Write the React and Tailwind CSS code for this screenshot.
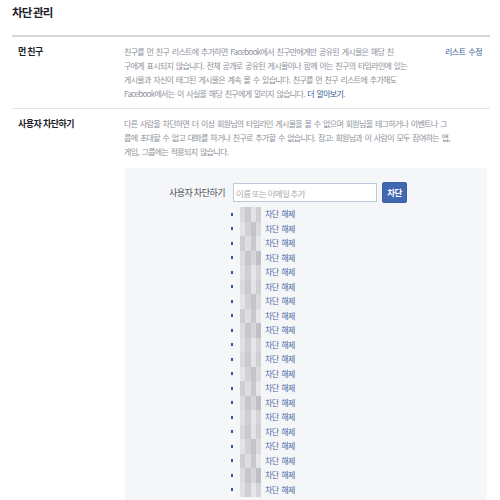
import React from 'react';

const shades = [
    ['#d9d9de', '#c9c9ce', '#e3e3e6', '#cfcfd4'],
    ['#e4e4e7', '#d2d2d6', '#c4c4c9', '#dadade'],
    ['#cdcdd2', '#dedee2', '#c9c9ce', '#e6e6e9'],
    ['#dcdce0', '#c6c6cb', '#d6d6da', '#bfbfc5'],
    ['#e0e0e4', '#cfcfd3', '#e6e6e9', '#d3d3d8'],
];

const BlurName = ({ i }) => {
    const row = shades[i % shades.length];
    return (
        <div className="flex h-[14.5px] w-[21px] blur-[0.6px]">
            {row.map((c, k) => (
                <span key={k} className="h-full flex-1" style={{ backgroundColor: c }} />
            ))}
        </div>
    );
};

const App = () => {
    const blocked = Array.from({ length: 20 }, (_, i) => i);

    return (
        <div className="w-[500px] h-[500px] overflow-hidden bg-white font-['Noto_Sans_CJK_KR',sans-serif]">
            <div className="pl-3 pr-[10px]">
                {/* Title */}
                <div className="h-[37px] pt-[5px] border-b-2 border-[#d6d8dc]">
                    <h1 className="text-[11.5px] leading-[14px] font-bold tracking-[-0.9px] text-[#1d2129]">차단 관리</h1>
                </div>

                {/* Restricted friends */}
                <div className="flex pt-[8px] pb-[7px] border-b border-[#e3e5e8]">
                    <div className="w-[112px] pl-[6px] text-[9px] leading-[14px] font-bold tracking-[-0.5px] text-[#1d2129]">먼 친구</div>
                    <div className="w-[318px] text-[8px] leading-[14px] tracking-[-0.7px] [word-spacing:1.5px] text-[#8d9199] whitespace-nowrap">
                        <div>친구를 먼 친구 리스트에 추가하면 Facebook에서 친구만에게만 공유된 게시물은 해당 친</div>
                        <div>구에게 표시되지 않습니다. 전체 공개로 공유된 게시물이나 함께 아는 친구의 타임라인에 있는</div>
                        <div>게시물과 자신이 태그된 게시물은 계속 볼 수 있습니다. 친구를 먼 친구 리스트에 추가해도</div>
                        <div>Facebook에서는 이 사실을 해당 친구에게 알리지 않습니다. <span className="text-[#365899]">더 알아보기</span>.</div>
                    </div>
                    <div className="ml-[3px] text-[8px] leading-[14px] tracking-[-0.5px] [word-spacing:1.5px] text-[#365899] whitespace-nowrap">리스트 수정</div>
                </div>

                {/* Block users */}
                <div className="flex pt-[8px]">
                    <div className="w-[112px] shrink-0 pl-[6px] text-[9px] leading-[14px] font-bold tracking-[-0.5px] text-[#1d2129]">사용자 차단하기</div>
                    <div className="flex-1">
                        <div className="text-[8px] leading-[14px] tracking-[-0.7px] [word-spacing:1.5px] text-[#8d9199] whitespace-nowrap">
                            <div>다른 사람을 차단하면 더 이상 회원님의 타임라인 게시물을 볼 수 없으며 회원님을 태그하거나 이벤트나 그</div>
                            <div>룹에 초대할 수 없고 대화를 하거나 친구로 추가할 수 없습니다. 참고: 회원님과 이 사람이 모두 참여하는 앱,</div>
                            <div>게임, 그룹에는 적용되지 않습니다.</div>
                        </div>

                        <div className="mt-[9px] ml-px mr-[3px] bg-[#f5f6f8] pt-[14px] pb-4">
                            <div className="flex items-center">
                                <div className="w-[100px] text-right text-[9px] tracking-[-0.5px] text-[#4b4f56] whitespace-nowrap">사용자 차단하기</div>
                                <input
                                    type="text"
                                    placeholder="이름 또는 이메일 추가"
                                    className="ml-[8px] w-[144px] h-[19px] px-[2px] bg-white border border-[#bdc7d8] text-[8.5px] tracking-[-0.6px] placeholder:text-[#a7abb1] outline-none"
                                />
                                <button className="ml-[5px] w-[25px] h-[21px] rounded-[2px] bg-[#4267b2] border border-[#3b5fa6] text-white text-[8.5px] font-bold tracking-[-0.5px]">
                                    차단
                                </button>
                            </div>

                            <ul className="mt-[4px]">
                                {blocked.map((i) => (
                                    <li key={i} className="flex items-center h-[14.5px] pl-[106px]">
                                        <span className="w-[2px] h-[3px] bg-[#365899]" />
                                        <span className="ml-[7px]">
                                            <BlurName i={i} />
                                        </span>
                                        <span className="ml-[4px] text-[8px] leading-[14px] tracking-[-0.6px] [word-spacing:1.5px] text-[#4b6aa5] whitespace-nowrap">차단 해제</span>
                                    </li>
                                ))}
                            </ul>
                        </div>
                    </div>
                </div>
            </div>
        </div>
    );
};

export default App;
